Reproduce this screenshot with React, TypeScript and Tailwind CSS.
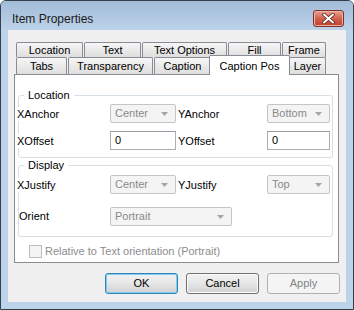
import React from 'react'

const FONT = { fontFamily: '"Liberation Sans", Arial, sans-serif' }

const ROW1 = [
  { label: 'Location', w: 'w-[67px]' },
  { label: 'Text', w: 'w-[57px]' },
  { label: 'Text Options', w: 'w-[85px]' },
  { label: 'Fill', w: 'w-[53px]' },
  { label: 'Frame', w: 'w-[44px]' },
]

function Tab({ label, w, last }: { label: string; w: string; last?: boolean }) {
  return (
    <div
      className={`${w} ${last ? '' : 'mr-[1px]'} h-full flex items-center justify-center border border-b-0 border-[#898c95] rounded-t-[2px] bg-gradient-to-b from-[#f6f6f6] to-[#dedede] text-black`}
    >
      {label}
    </div>
  )
}

function Arrow({ color = '#a5a5a5' }: { color?: string }) {
  return (
    <svg width="7" height="4" viewBox="0 0 7 4">
      <path d="M0 0 H7 L3.5 4 Z" fill={color} />
    </svg>
  )
}

function Combo({ value, w }: { value: string; w: string }) {
  return (
    <div
      className={`${w} h-[19px] flex items-center justify-between pl-[4px] pr-[7px] border border-[#c3c6c9] rounded-[2px] bg-[#f4f4f4] text-[#8a8a8a]`}
    >
      <span>{value}</span>
      <Arrow />
    </div>
  )
}

function Edit({ value, w }: { value: string; w: string }) {
  return (
    <div className={`${w} h-[19px] flex items-center pl-[4px] border border-[#abadb3] border-t-[#9a9ea6] bg-white text-black`}>
      {value}
    </div>
  )
}

function Label({ children, w }: { children: React.ReactNode; w: string }) {
  return <div className={`${w} bg-white leading-[14px] text-black`}>{children}</div>
}

function Group({ title, h, children }: { title: string; h: string; children: React.ReactNode }) {
  return (
    <div className={`relative ml-[3px] w-[315px] ${h} border border-[#d5dfe5] rounded-[3px]`}>
      <div className="absolute left-[5px] -top-[8px] px-[4px] bg-white leading-[14px] text-black">{title}</div>
      {children}
    </div>
  )
}

function Button({ label, kind }: { label: string; kind?: 'default' | 'disabled' }) {
  if (kind === 'disabled') {
    return (
      <div className="w-[73px] h-[21px] flex items-center justify-center border border-[#adb2b5] rounded-[3px] bg-[#f4f4f4] text-[#838383]">
        {label}
      </div>
    )
  }
  return (
    <div
      className={`w-[73px] h-[21px] flex items-center justify-center rounded-[3px] border text-black bg-gradient-to-b from-[#f2f2f2] via-[#e6e6e6] to-[#d0d0d0] ${
        kind === 'default' ? 'border-[#3c7fb1] shadow-[inset_0_0_0_1px_#74d1f5]' : 'border-[#707070] shadow-[inset_0_0_0_1px_#fcfcfc]'
      }`}
    >
      {label}
    </div>
  )
}

export default function App() {
  return (
    <div className="w-[354px] h-[310px] bg-white" style={FONT}>
      <div className="w-[354px] h-[310px] flex flex-col border border-[#34404e] rounded-t-[6px] bg-[#bcd3ea] text-[11px] overflow-hidden">
        {/* title bar */}
        <div className="h-[29px] flex items-center justify-between pt-[5px] pl-[11px] pr-[9px] bg-gradient-to-b from-[#a2bcd8] to-[#bcd2e9]">
          <span className="text-[12px] text-[#1b1b1b] mt-[1px]">Item Properties</span>
          <div className="w-[31px] h-[17px] flex items-center justify-center rounded-[3px] border border-[#7f3128] bg-gradient-to-b from-[#e7a191] via-[#d0624e] to-[#bf3f2b] shadow-[inset_0_0_0_1px_#eab3a6]">
            <svg width="13" height="11" viewBox="0 0 13 11">
              <path d="M2 1.5 L11 9.5 M11 1.5 L2 9.5" stroke="#5a231b" strokeWidth="3.6" strokeLinecap="round" />
              <path d="M2 1.5 L11 9.5 M11 1.5 L2 9.5" stroke="#ffffff" strokeWidth="2" strokeLinecap="round" />
            </svg>
          </div>
        </div>

        {/* client area */}
        <div className="flex-1 mx-[7px] mb-[7px] bg-[#f0f0f0] flex flex-col pt-[12px]">
          {/* tab rows */}
          <div className="ml-[8px] h-[15px] flex">
            {ROW1.map((t, i) => (
              <Tab key={t.label} label={t.label} w={t.w} last={i === ROW1.length - 1} />
            ))}
          </div>
          <div className="ml-[8px] h-[17px] flex">
            <Tab label="Tabs" w="w-[51px]" />
            <Tab label="Transparency" w="w-[85px]" />
            <Tab label="Caption" w="w-[57px]" last />
            <div className="relative z-10 self-start -mt-[2px] -ml-[2px] -mr-[1px] w-[81px] h-[20px] flex items-start justify-center pt-[2px] border border-b-0 border-[#898c95] rounded-t-[2px] bg-white text-black">
              Caption Pos
            </div>
            <Tab label="Layer" w="w-[37px]" last />
          </div>

          {/* page */}
          <div className="ml-[6px] w-[325px] h-[189px] border border-[#898c95] bg-white flex flex-col pt-[20px]">
            <Group title="Location" h="h-[63px]">
              <div className="-ml-[2px] mt-[8px] flex items-center">
                <Label w="w-[93px]">XAnchor</Label>
                <Combo value="Center" w="w-[66px]" />
                <Label w="w-[90px] ml-[1px] pl-[1px]">YAnchor</Label>
                <Combo value="Bottom" w="w-[63px]" />
              </div>
              <div className="-ml-[2px] mt-[8px] flex items-center">
                <Label w="w-[93px]">XOffset</Label>
                <Edit value="0" w="w-[66px]" />
                <Label w="w-[90px] ml-[1px] pl-[1px]">YOffset</Label>
                <Edit value="0" w="w-[63px]" />
              </div>
            </Group>

            <div className="mt-[7px]">
              <Group title="Display" h="h-[72px]">
                <div className="-ml-[2px] mt-[9px] flex items-center">
                  <Label w="w-[93px]">XJustify</Label>
                  <Combo value="Center" w="w-[66px]" />
                  <Label w="w-[90px] ml-[1px] pl-[1px]">YJustify</Label>
                  <Combo value="Top" w="w-[63px]" />
                </div>
                <div className="mt-[13px] flex items-center">
                  <div className="w-[91px] text-black">Orient</div>
                  <Combo value="Portrait" w="w-[122px]" />
                </div>
              </Group>
            </div>

            <div className="mt-[6px] ml-[14px] flex items-center gap-[3px]">
              <div className="w-[13px] h-[13px] border border-[#bcbcbc] bg-[#f4f4f4]" />
              <span className="text-[#8d8d8d]">Relative to Text orientation (Portrait)</span>
            </div>
          </div>

          {/* buttons */}
          <div className="mt-[10px] mr-[6px] flex justify-end gap-[8px]">
            <Button label="OK" kind="default" />
            <Button label="Cancel" />
            <Button label="Apply" kind="disabled" />
          </div>
        </div>
      </div>
    </div>
  )
}
